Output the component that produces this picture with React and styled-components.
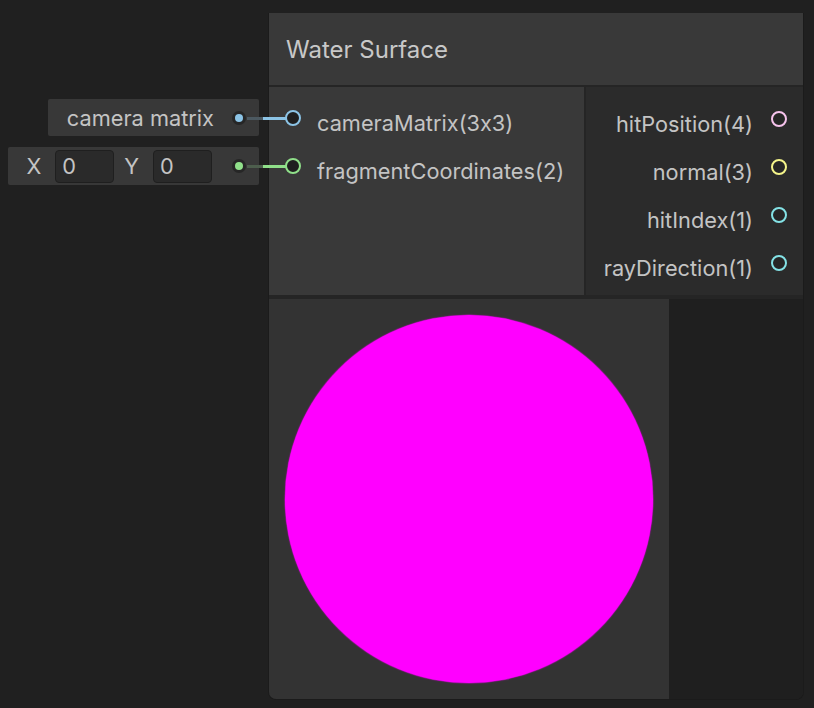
import styled, { createGlobalStyle } from 'styled-components';

const Global = createGlobalStyle`
  html, body { margin: 0; padding: 0; background: #202020; }
  body {
    font-family: Inter, "Noto Sans", sans-serif; color: #c4c4c4;
    font-feature-settings: "calt" 0;
  }
`;

const Canvas = styled.div`
  display: flex; align-items: flex-start; gap: 9px;
  width: 814px; height: 708px; padding-top: 13px; box-sizing: border-box;
`;

const InlineColumn = styled.div`
  width: 259px; padding-top: 86px;
  display: flex; flex-direction: column; align-items: flex-end; gap: 11px;
`;

const InlineBox = styled.div`
  display: flex; align-items: center; box-sizing: border-box;
  height: ${p => p.$h}px; padding: 0 13px 0 ${p => p.$pl}px;
  background: #383838; border-radius: 2px;
  font-size: 21.75px;
`;

const InlineLabel = styled.span`
  margin-right: ${p => p.$mr || 0}px;
`;

const Field = styled.div`
  width: 59px; height: 33px; box-sizing: border-box;
  display: flex; align-items: center; padding-left: 6px;
  background: #2a2a2a; border: 1px solid #1f1f1f; border-radius: 4px;
  margin: 0 ${p => p.$mr}px 0 14px;
`;

const Dot = styled.span`
  width: 14px; height: 14px; border-radius: 50%; background: #262626;
  display: flex; align-items: center; justify-content: center;
  &::after {
    content: ''; width: 8px; height: 8px; border-radius: 50%; background: ${p => p.$c};
  }
`;

const Node = styled.div`
  width: 536px; height: 687px; box-sizing: border-box;
  display: flex; flex-direction: column;
  border: 1px solid #1b1b1b; border-top: none; border-radius: 0 0 8px 8px;
  background: #252525;
`;

const Title = styled.div`
  height: 72px; flex: none; display: flex; align-items: center;
  padding-left: 17px; background: #393939;
  font-size: 24px; color: #c8c8c8;
`;

const PortsRow = styled.div`
  display: flex; gap: 2px; height: 208px; margin-top: 2px; flex: none;
`;

const Inputs = styled.div`
  width: 315px; background: #393939; padding-top: 7px;
`;

const Outputs = styled.div`
  flex: 1; background: #2b2b2b; padding-top: 8px;
`;

const Row = styled.div`
  height: 48px; display: flex; align-items: center;
  justify-content: ${p => (p.$out ? 'flex-end' : 'flex-start')};
  padding: ${p => (p.$out ? '0 16px 0 0' : '0 0 0 16px')};
  gap: ${p => (p.$out ? 18 : 16)}px; font-size: 21.75px;
`;

const PortLabel = styled.span`
  margin-top: 9px;
`;

const Port = styled.span`
  position: relative; flex: none;
  width: 16px; height: 16px; box-sizing: border-box; border-radius: 50%;
  border: 2px solid ${p => p.$c}; background: ${p => (p.$out ? '#262626' : '#1f1f1f')};
  ${p => p.$wire && `
    &::before {
      content: ''; position: absolute; right: 100%; top: 50%;
      width: 40px; height: 3px; margin-top: -1.5px;
      background: linear-gradient(to right, ${p.$dim} 0 16px, ${p.$c} 16px);
    }
  `}
`;

const PreviewRow = styled.div`
  display: flex; margin-top: 4px; height: 400px; flex: none;
  border-radius: 0 0 7px 7px; overflow: hidden; background: #1f1f1f;
`;

const Preview = styled.div`
  width: 400px; height: 400px; background: #333333;
  display: flex; align-items: center; justify-content: center;
`;

const Disc = styled.div`
  width: 368px; height: 368px; border-radius: 50%; background: #ff00ff;
  box-shadow: 0 0 1px 0.5px #b010b0;
`;

const BLUE = '#8cc4e6';
const GREEN = '#90e08a';

const inputs = [
  { name: 'cameraMatrix(3x3)', c: BLUE, dim: '#4c5961' },
  { name: 'fragmentCoordinates(2)', c: GREEN, dim: '#4d5e4d' },
];

const outputs = [
  { name: 'hitPosition(4)', c: '#f6c3ec' },
  { name: 'normal(3)', c: '#f4f48a' },
  { name: 'hitIndex(1)', c: '#84e2e6' },
  { name: 'rayDirection(1)', c: '#84e2e6' },
];

export default function App() {
  return (
    <>
      <Global />
      <Canvas>
        <InlineColumn>
          <InlineBox $h={37} $pl={19}>
            <InlineLabel $mr={18}>camera matrix</InlineLabel>
            <Dot $c={BLUE} />
          </InlineBox>
          <InlineBox $h={38} $pl={18}>
            <InlineLabel>X</InlineLabel>
            <Field $mr={10}>0</Field>
            <InlineLabel>Y</InlineLabel>
            <Field $mr={20}>0</Field>
            <Dot $c={GREEN} />
          </InlineBox>
        </InlineColumn>

        <Node>
          <Title>Water Surface</Title>
          <PortsRow>
            <Inputs>
              {inputs.map(p => (
                <Row key={p.name}>
                  <Port $c={p.c} $dim={p.dim} $wire />
                  <PortLabel>{p.name}</PortLabel>
                </Row>
              ))}
            </Inputs>
            <Outputs>
              {outputs.map(p => (
                <Row key={p.name} $out>
                  <PortLabel>{p.name}</PortLabel>
                  <Port $c={p.c} $out />
                </Row>
              ))}
            </Outputs>
          </PortsRow>
          <PreviewRow>
            <Preview>
              <Disc />
            </Preview>
          </PreviewRow>
        </Node>
      </Canvas>
    </>
  );
}
